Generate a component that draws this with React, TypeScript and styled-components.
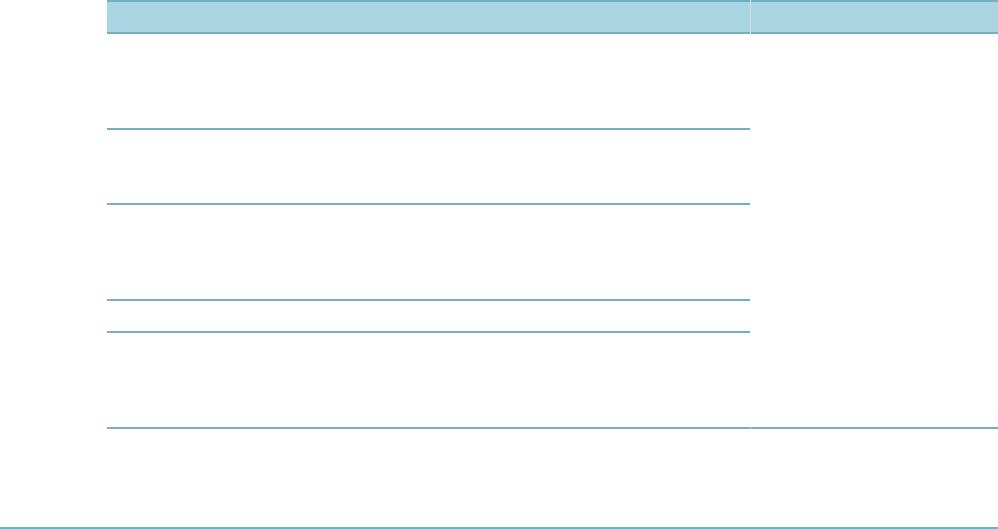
import React from "react";
import styled, { createGlobalStyle } from "styled-components";

const Global = createGlobalStyle`
  html, body { margin: 0; padding: 0; background: #ffffff; }
  body { font-family: "Liberation Sans", Arial, sans-serif; }
`;

const LINE = "#74aec1";
const HEAD = "#a9d4e1";
const SEP = "#c9e3eb";

const Page = styled.div`
  width: 998px;
  display: flex;
  flex-direction: column;
`;

const Table = styled.div`
  margin-left: 107px;
  display: flex;
  flex-direction: column;
`;

const Grid = styled.div`
  display: grid;
  grid-template-columns: 643px 1px 1fr;
`;

const HeadCell = styled.div`
  height: 30px;
  background: ${HEAD};
  border-top: 2px solid ${LINE};
  border-bottom: 2px solid ${LINE};
`;

const HeadDivider = styled.div`
  background: ${SEP};
`;

const Stack = styled.div`
  display: flex;
  flex-direction: column;
`;

const Row = styled.div<{ $h: number; $ruled?: boolean }>`
  height: ${(p) => p.$h}px;
  border-bottom: ${(p) => (p.$ruled ? `2px solid ${LINE}` : "none")};
`;

const SpanCell = styled.div<{ $ruled?: boolean }>`
  border-bottom: ${(p) => (p.$ruled ? `2px solid ${LINE}` : "none")};
`;

const Divider = styled.div<{ $ruled?: boolean }>`
  background: #ffffff;
  border-bottom: ${(p) => (p.$ruled ? `2px solid ${SEP}` : "none")};
`;

const Rule = styled.div`
  height: 2px;
  background: ${LINE};
`;

export default function App() {
  return (
    <>
      <Global />
      <Page>
        <Table>
          <Grid>
            <HeadCell />
            <HeadDivider />
            <HeadCell />
          </Grid>
          <Grid>
            <Stack>
              <Row $h={94} $ruled />
              <Row $h={73} $ruled />
              <Row $h={94} $ruled />
              <Row $h={30} $ruled />
              <Row $h={94} $ruled />
            </Stack>
            <Divider $ruled />
            <SpanCell $ruled />
          </Grid>
          <Grid>
            <Row $h={98} />
            <Divider />
            <SpanCell />
          </Grid>
        </Table>
        <Rule />
      </Page>
    </>
  );
}
